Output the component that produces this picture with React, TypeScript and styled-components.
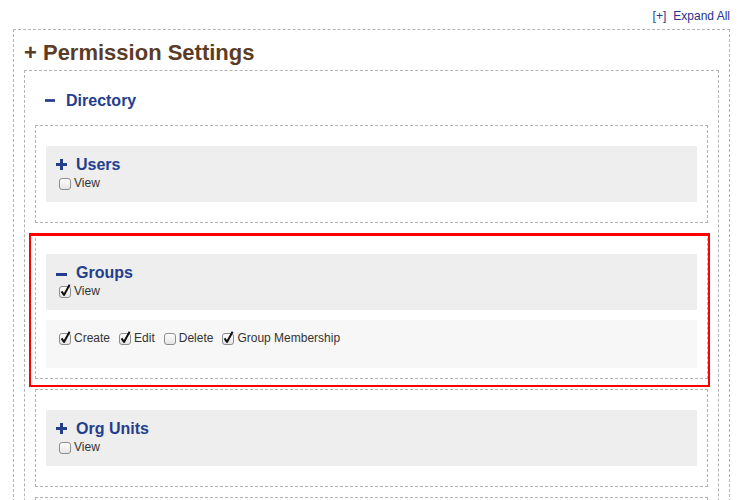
import * as React from "react";
import styled, { createGlobalStyle } from "styled-components";

const GlobalStyle = createGlobalStyle`
  body {
    margin: 0;
    background: #fff;
    font-family: "Liberation Sans", Arial, Helvetica, sans-serif;
    color: #333;
  }
`;

interface Action {
  label: string;
  checked: boolean;
}

interface Section {
  name: string;
  open: boolean;
  view: boolean;
  highlighted?: boolean;
  actions?: Action[];
}

const initialSections: Section[] = [
  { name: "Users", open: false, view: false },
  {
    name: "Groups",
    open: true,
    view: true,
    highlighted: true,
    actions: [
      { label: "Create", checked: true },
      { label: "Edit", checked: true },
      { label: "Delete", checked: false },
      { label: "Group Membership", checked: true },
    ],
  },
  { name: "Org Units", open: false, view: false },
  { name: "Roles", open: false, view: false },
];

const Toggle: React.FC<{ open: boolean; barY?: number }> = ({ open, barY = 6 }) => (
  <ToggleIcon width="11" height="11" viewBox="0 0 11 11">
    {open ? (
      <rect x="0" y={barY} width="11" height="3" fill="currentColor" />
    ) : (
      <>
        <rect x="0" y="4" width="11" height="3" fill="currentColor" />
        <rect x="4" y="0" width="3" height="11" fill="currentColor" />
      </>
    )}
  </ToggleIcon>
);

const Check: React.FC<{ checked: boolean; label: string; onToggle: () => void }> = ({
  checked,
  label,
  onToggle,
}) => (
  <CheckLabel onClick={onToggle}>
    <svg width="14" height="14" viewBox="0 0 14 14">
      <defs>
        <linearGradient id="cbg" x1="0" y1="0" x2="0" y2="1">
          <stop offset="0" stopColor="#ffffff" />
          <stop offset="1" stopColor="#e4e4e4" />
        </linearGradient>
      </defs>
      <rect x="1.5" y="2.5" width="11" height="11" rx="2.5" fill="url(#cbg)" stroke="#8d8d8d" />
      {checked && (
        <path
          d="M3.6 7.4 L6 11 L11.6 0.8"
          fill="none"
          stroke="#111"
          strokeWidth="2"
          strokeLinejoin="round"
        />
      )}
    </svg>
    <span>{label}</span>
  </CheckLabel>
);

export default function App() {
  const [sections, setSections] = React.useState(initialSections);

  const toggleView = (i: number) =>
    setSections((s) => s.map((x, j) => (j === i ? { ...x, view: !x.view } : x)));

  const toggleAction = (i: number, a: number) =>
    setSections((s) =>
      s.map((x, j) =>
        j === i && x.actions
          ? {
              ...x,
              actions: x.actions.map((y, k) => (k === a ? { ...y, checked: !y.checked } : y)),
            }
          : x
      )
    );

  return (
    <Page>
      <GlobalStyle />
      <Toolbar>
        <Bracket>[+]</Bracket>
        <ExpandLink href="#">Expand All</ExpandLink>
      </Toolbar>

      <OuterBox>
        <Title>+ Permission Settings</Title>

        <GroupBox>
          <GroupHeader>
            <Toggle open barY={4} />
            Directory
          </GroupHeader>

          {sections.map((s, i) => (
            <Container key={s.name} highlighted={s.highlighted}>
              <HeaderPanel>
                <SectionTitle>
                  <Toggle open={s.open} />
                  {s.name}
                </SectionTitle>
                <Check checked={s.view} label="View" onToggle={() => toggleView(i)} />
              </HeaderPanel>
              {s.open && s.actions && (
                <ActionPanel>
                  {s.actions.map((a, k) => (
                    <Check
                      key={a.label}
                      checked={a.checked}
                      label={a.label}
                      onToggle={() => toggleAction(i, k)}
                    />
                  ))}
                </ActionPanel>
              )}
            </Container>
          ))}
        </GroupBox>
      </OuterBox>
    </Page>
  );
}

const Page = styled.div`
  padding: 0 9px 0 13px;
`;

const Toolbar = styled.div`
  display: flex;
  justify-content: flex-end;
  align-items: baseline;
  padding-top: 8px;
  height: 21px;
  font-size: 12px;
  line-height: 16px;
`;

const Bracket = styled.span`
  color: #2b3b8c;
  margin-right: 7px;
`;

const ExpandLink = styled.a`
  color: #2c2f8e;
  text-decoration: none;
`;

const OuterBox = styled.div`
  border: 1px dashed #b3b3b3;
  padding: 9px 10px 0;
`;

const Title = styled.h1`
  margin: 0 0 3px 0;
  font-size: 22px;
  line-height: 28px;
  font-weight: bold;
  color: #5b3c26;
`;

const GroupBox = styled.div`
  border: 1px dashed #b3b3b3;
  padding: 20px 10px 0;
`;

const GroupHeader = styled.h2`
  margin: 0 0 14px 10px;
  font-size: 16px;
  line-height: 20px;
  font-weight: bold;
  color: #243e8d;

  & svg {
    width: 10px;
    margin-right: 11px;
  }
`;

const Container = styled.div<{ highlighted?: boolean }>`
  position: relative;
  border: 1px dashed #b3b3b3;
  padding: 20px 10px 10px;
  margin-bottom: 10px;

  ${(p) =>
    p.highlighted &&
    `
    &::after {
      content: "";
      position: absolute;
      top: -1px;
      left: -7px;
      right: -3px;
      bottom: -9px;
      border: 2px solid #ff0000;
      border-top-width: 3px;
      pointer-events: none;
    }
  `}
`;

const HeaderPanel = styled.div`
  background: #eeeeee;
  padding: 9px 10px 11px;
  margin-bottom: 10px;
`;

const ActionPanel = styled.div`
  display: flex;
  gap: 6px;
  background: #f7f7f7;
  padding: 10px 10px 22px;
`;

const SectionTitle = styled.h3`
  margin: 0;
  font-size: 16px;
  line-height: 20px;
  font-weight: bold;
  color: #243e8d;

  & svg {
    margin-right: 9px;
  }
`;

const ToggleIcon = styled.svg`
  display: inline-block;
  vertical-align: 0;
`;

const CheckLabel = styled.label`
  display: flex;
  width: fit-content;
  align-items: center;
  height: 16px;
  font-size: 12px;
  line-height: 16px;
  color: #333;
  cursor: pointer;

  & svg {
    margin: 0 2px 0 2px;
  }
`;
